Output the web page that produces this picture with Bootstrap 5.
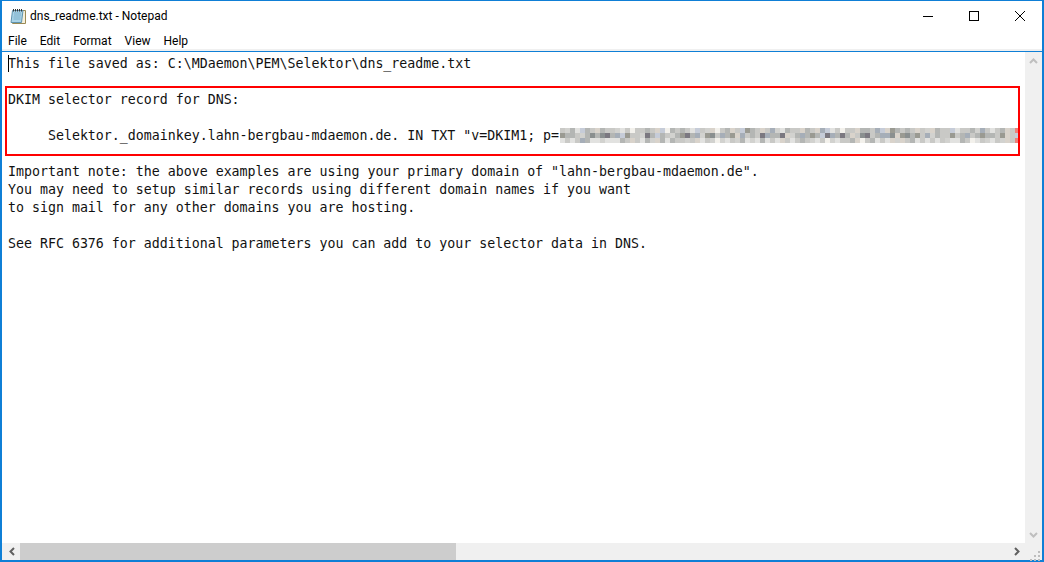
<!DOCTYPE html>
<html lang="en">
<head>
<meta charset="utf-8">
<title>dns_readme.txt - Notepad</title>
<link href="https://cdn.jsdelivr.net/npm/bootstrap@5.3.0/dist/css/bootstrap.min.css" rel="stylesheet">
<style>
html,body{margin:0;height:562px;overflow:hidden;background:#fff}
.np-win{width:1044px;height:562px;border:2px solid #0f7fd6;border-top-width:1px;background:#fff;font-family:Roboto,"Noto Sans",sans-serif;color:#000}
.np-title{height:30px;font-size:12px;padding-left:7px;gap:3px}
.np-title svg{flex:none}
.np-caps{align-self:flex-start;margin-right:-1px}
.np-caps svg{display:block}
.np-cap{width:46px;height:29px}
.np-menu{height:19px;font-size:12px;padding-left:4px;gap:9px;border-bottom:1px solid #f0f0f0}
.np-menu span{padding:0 2px;line-height:20px}
.np-rule{height:2px;background:linear-gradient(#f0f0f0 50%,#0f7fd6 50%)}
.np-body{min-height:0}
.np-text{width:1023px;overflow:hidden;padding:3px 0 0 6px;font-family:"DejaVu Sans Mono","Liberation Mono",monospace;font-size:13.285px;line-height:18px;margin:0;white-space:pre;position:relative;color:#111}
.np-caret{position:absolute;left:6px;top:3px;width:1px;height:17px;background:#000}
.np-redbox{position:absolute;left:3px;top:34px;width:1015px;height:70px;border:2px solid #f00;pointer-events:none}
.np-blur{position:absolute;left:558px;top:76px}
.np-vbar{width:17px;background:#f0f0f0}
.np-hbar{height:17px;background:#f0f0f0;padding-left:1px}
.np-btn{width:17px;height:17px;flex:none}
.np-thumb{width:436px;background:#cdcdcd}
</style>
</head>
<body>
<div class="np-win d-flex flex-column">
  <div class="np-title d-flex align-items-center">
    <svg width="18" height="18" viewBox="0 0 18 18" aria-hidden="true">
      <path d="M5.500 3.500h11v13h-13z" fill="#f5f0dc" stroke="#9a8a55"/>
      <path d="M3.500 3.500h10.500l-1.500 12h-10.500z" fill="#a9d3e8" stroke="#5f93ad"/>
      <path d="M5 6h7M5 8h7M4.500 10h7M4.500 12h7" stroke="#7fb1c9"/>
      <path d="M4.500 2v2.500M6.500 2v2.500M8.500 2v2.500M10.500 2v2.500M12.500 2v2.500" stroke="#333"/>
    </svg>
    <span>dns_readme.txt - Notepad</span>
    <div class="np-caps d-flex ms-auto">
      <div class="np-cap d-flex align-items-center justify-content-center"><svg width="10" height="10"><path d="M0 5.500h10" stroke="#000"/></svg></div>
      <div class="np-cap d-flex align-items-center justify-content-center"><svg width="10" height="10"><rect x=".5" y=".5" width="9" height="9" fill="none" stroke="#000"/></svg></div>
      <div class="np-cap d-flex align-items-center justify-content-center"><svg width="10" height="10"><path d="M0 0l10 10M10 0l-10 10" stroke="#000" fill="none"/></svg></div>
    </div>
  </div>
  <div class="np-menu d-flex"><span>File</span><span>Edit</span><span>Format</span><span>View</span><span>Help</span></div>
  <div class="np-rule"></div>
  <div class="np-body d-flex flex-grow-1">
    <pre class="np-text flex-grow-1">This file saved as: C:\MDaemon\PEM\Selektor\dns_readme.txt

DKIM selector record for DNS:

     Selektor._domainkey.lahn-bergbau-mdaemon.de. IN TXT "v=DKIM1; p=

Important note: the above examples are using your primary domain of "lahn-bergbau-mdaemon.de".
You may need to setup similar records using different domain names if you want
to sign mail for any other domains you are hosting.

See RFC 6376 for additional parameters you can add to your selector data in DNS.<span class="np-caret"></span><svg class="np-blur" id="blur" width="460" height="15" aria-hidden="true"></svg><span class="np-redbox"></span></pre>
    <div class="np-vbar d-flex flex-column justify-content-between">
      <div class="np-btn d-flex align-items-center justify-content-center"><svg width="9" height="6"><path d="M1 5l3.500-3.500L8 5" fill="none" stroke="#bfbfbf" stroke-width="2"/></svg></div>
      <div class="np-btn d-flex align-items-center justify-content-center"><svg width="9" height="6"><path d="M1 1l3.500 3.500L8 1" fill="none" stroke="#bfbfbf" stroke-width="2"/></svg></div>
    </div>
  </div>
  <div class="np-hbar d-flex">
    <div class="np-btn d-flex align-items-center justify-content-center"><svg width="6" height="9"><path d="M5 1L1.500 4.500 5 8" fill="none" stroke="#606060" stroke-width="2"/></svg></div>
    <div class="np-thumb"></div>
    <div class="np-btn ms-auto d-flex align-items-center justify-content-center"><svg width="6" height="9"><path d="M1 1l3.500 3.500L1 8" fill="none" stroke="#606060" stroke-width="2"/></svg></div>
    <div class="np-btn"><svg width="17" height="17"><path d="M13 4h2v2h-2zM13 8h2v2h-2zM13 12h2v2h-2zM9 8h2v2H9zM9 12h2v2H9zM5 12h2v2H5z" fill="#bdbdbd"/></svg></div>
  </div>
</div>
<script>
var pal={a:'#c9c9c6',b:'#b4b6b4',c:'#e2e2e0',d:'#9a9a92',e:'#7b7880',f:'#d9d3cb',g:'#c6ccd8',h:'#f3f1ec',i:'#a6aeb8',j:'#8a8f8f',k:'#d2d2cf',r:'#ee7f78'};
var rows=['akbcgbafbaakcahaabafghbabacgakfhabfagdbafaikcbaafbafigcahaafbbaigfdbabafakfbaagcaabkiacabfar',
'dbbakbjbjebigdaakebgbakbdebikdjaibdfiabaeibbefkbibdbgeibebfajeabiijfdjbdaikbaadabiabdbbadfagr',
'cacaibcckcccbafacbkfbcbaakafcakhkcakbckcbcacfacabakcahkcaabfhabcacfkfabcacacakccbahcakcakfar'];
var s='';rows.forEach(function(r,y){for(var x=0;x<r.length;x++){s+='<rect x="'+(x*5)+'" y="'+(y*5)+'" width="5" height="5" fill="'+pal[r[x]]+'"/>';}});
document.getElementById('blur').innerHTML=s;
</script>
</body>
</html>
